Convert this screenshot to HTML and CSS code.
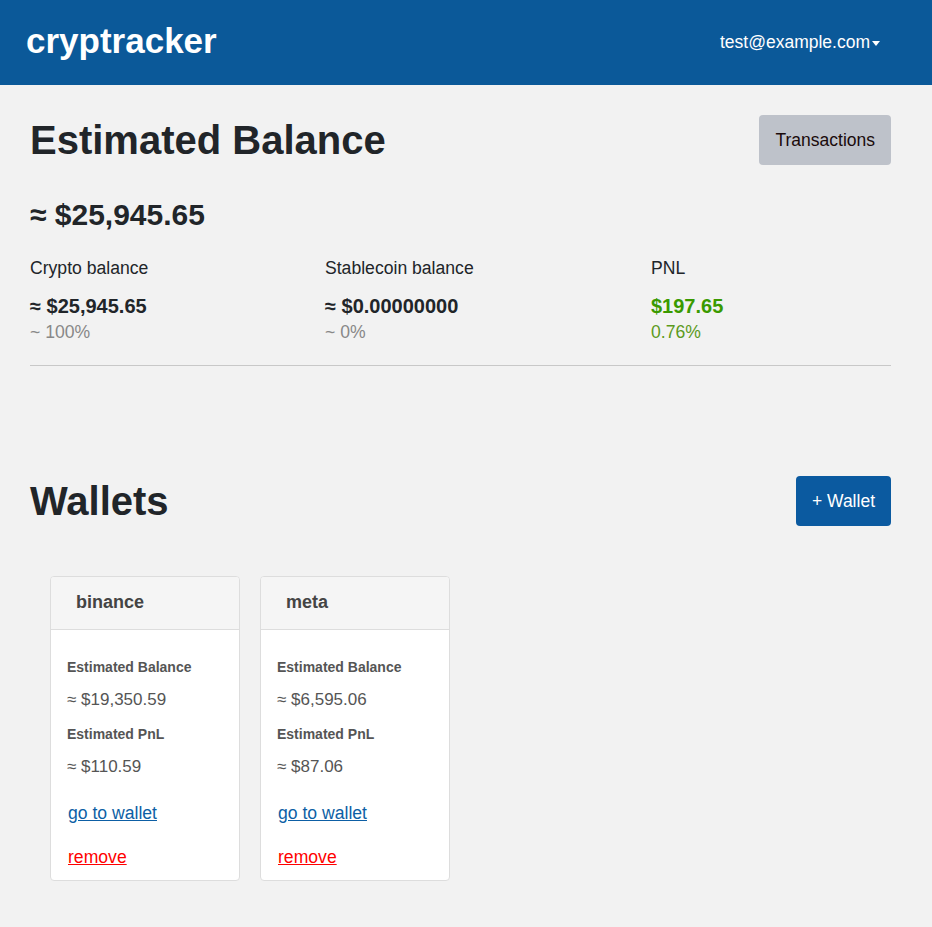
FILE: index.html
```html
<!DOCTYPE html>
<html>
<head>
<meta charset="utf-8">
<link rel="stylesheet" href="styles.css">
</head>
<body>
<header class="topbar">
  <div class="brand">cryptracker</div>
  <div class="user">test@example.com<span class="caret"></span></div>
</header>
<main class="content">
  <section class="balance">
    <div class="title-row">
      <h1 class="title">Estimated Balance</h1>
      <button class="btn btn-grey">Transactions</button>
    </div>
    <div class="total">≈ $25,945.65</div>
    <div class="stats">
      <div class="stat">
        <div class="stat-label">Crypto balance</div>
        <div class="stat-value">≈ $25,945.65</div>
        <div class="stat-pct">~ 100%</div>
      </div>
      <div class="stat">
        <div class="stat-label">Stablecoin balance</div>
        <div class="stat-value">≈ $0.00000000</div>
        <div class="stat-pct">~ 0%</div>
      </div>
      <div class="stat">
        <div class="stat-label">PNL</div>
        <div class="stat-value green">$197.65</div>
        <div class="stat-pct green-light">0.76%</div>
      </div>
    </div>
    <hr class="divider">
  </section>
  <section class="wallets">
    <div class="title-row wallets-row">
      <h1 class="title">Wallets</h1>
      <button class="btn btn-blue">+ Wallet</button>
    </div>
    <div class="cards">
      <div class="card">
        <div class="card-head">binance</div>
        <div class="card-body">
          <div class="c-label">Estimated Balance</div>
          <div class="c-value">≈ $19,350.59</div>
          <div class="c-label">Estimated PnL</div>
          <div class="c-value">≈ $110.59</div>
          <a class="link" href="#">go to wallet</a>
          <a class="link remove" href="#">remove</a>
        </div>
      </div>
      <div class="card">
        <div class="card-head">meta</div>
        <div class="card-body">
          <div class="c-label">Estimated Balance</div>
          <div class="c-value">≈ $6,595.06</div>
          <div class="c-label">Estimated PnL</div>
          <div class="c-value">≈ $87.06</div>
          <a class="link" href="#">go to wallet</a>
          <a class="link remove" href="#">remove</a>
        </div>
      </div>
    </div>
  </section>
</main>
</body>
</html>
```
FILE: styles.css
```css
* { box-sizing: border-box; }
html, body { margin: 0; padding: 0; }
body {
  background: #f2f2f2;
  font-family: "Liberation Sans", Arial, sans-serif;
  color: #212529;
}
.topbar {
  height: 85px;
  background: #0b5999;
  display: flex;
  align-items: center;
  justify-content: space-between;
  padding: 0 52px 0 26px;
  color: #fff;
}
.brand {
  font-size: 35px;
  font-weight: bold;
  margin-top: -4px;
}
.user {
  font-size: 17.5px;
  display: flex;
  align-items: center;
  margin-top: -1px;
}
.caret {
  width: 0; height: 0;
  border-left: 4px solid transparent;
  border-right: 4px solid transparent;
  border-top: 5px solid #fff;
  margin-left: 2px;
  margin-top: 2px;
}
.content {
  padding: 30px 41px 40px 30px;
}
.title-row {
  display: flex;
  justify-content: space-between;
  align-items: flex-start;
}
.title {
  margin: 0;
  font-size: 40px;
  font-weight: bold;
  line-height: 50px;
  color: #212529;
}
.btn {
  font-family: "Liberation Sans", Arial, sans-serif;
  font-size: 17.5px;
  border: none;
  border-radius: 4px;
  height: 50px;
  padding: 0 16px;
}
.btn-grey { background: #bec2ca; color: #1a0a0a; }
.btn-blue { background: #0b5aa0; color: #fff; }
.total {
  margin-top: 34px;
  font-size: 30px;
  font-weight: bold;
  line-height: 32px;
}
.stats {
  display: grid;
  grid-template-columns: 295px 326px 1fr;
  margin-top: 27px;
}
.stat-label { font-size: 17.6px; line-height: 20px; }
.stat-value { font-size: 20px; font-weight: bold; margin-top: 17px; line-height: 22px; }
.stat-pct { font-size: 17.6px; color: #888; line-height: 20px; margin-top: 5px; }
.green { color: #3a9a00; }
.green-light { color: #5c9a1c; }
.divider {
  border: none;
  border-top: 1px solid #c8c8c8;
  margin: 23px 0 0 0;
}
.wallets-row { margin-top: 110px; }
.cards {
  display: flex;
  gap: 20px;
  padding-left: 20px;
  margin-top: 50px;
}
.card {
  width: 190px;
  background: #fff;
  border: 1px solid #ddd;
  border-radius: 4px;
  overflow: hidden;
}
.card-head {
  height: 53px;
  background: #f5f5f5;
  border-bottom: 1px solid #ddd;
  font-size: 18px;
  font-weight: bold;
  color: #444;
  padding: 15px 0 0 25px;
}
.card-body {
  padding: 29px 16px 12px 16px;
  display: flex;
  flex-direction: column;
  align-items: flex-start;
}
.c-label {
  font-size: 14px;
  font-weight: bold;
  color: #555;
  line-height: 16px;
}
.c-value {
  font-size: 17px;
  color: #555;
  line-height: 20px;
  margin: 15px 0 16px;
}
.link {
  font-size: 17.6px;
  color: #0d5fa5;
  text-decoration: underline;
  line-height: 22px;
  margin-top: 9px;
  margin-left: 1px;
}
.remove { color: #f00; margin-top: 22px; }
```
